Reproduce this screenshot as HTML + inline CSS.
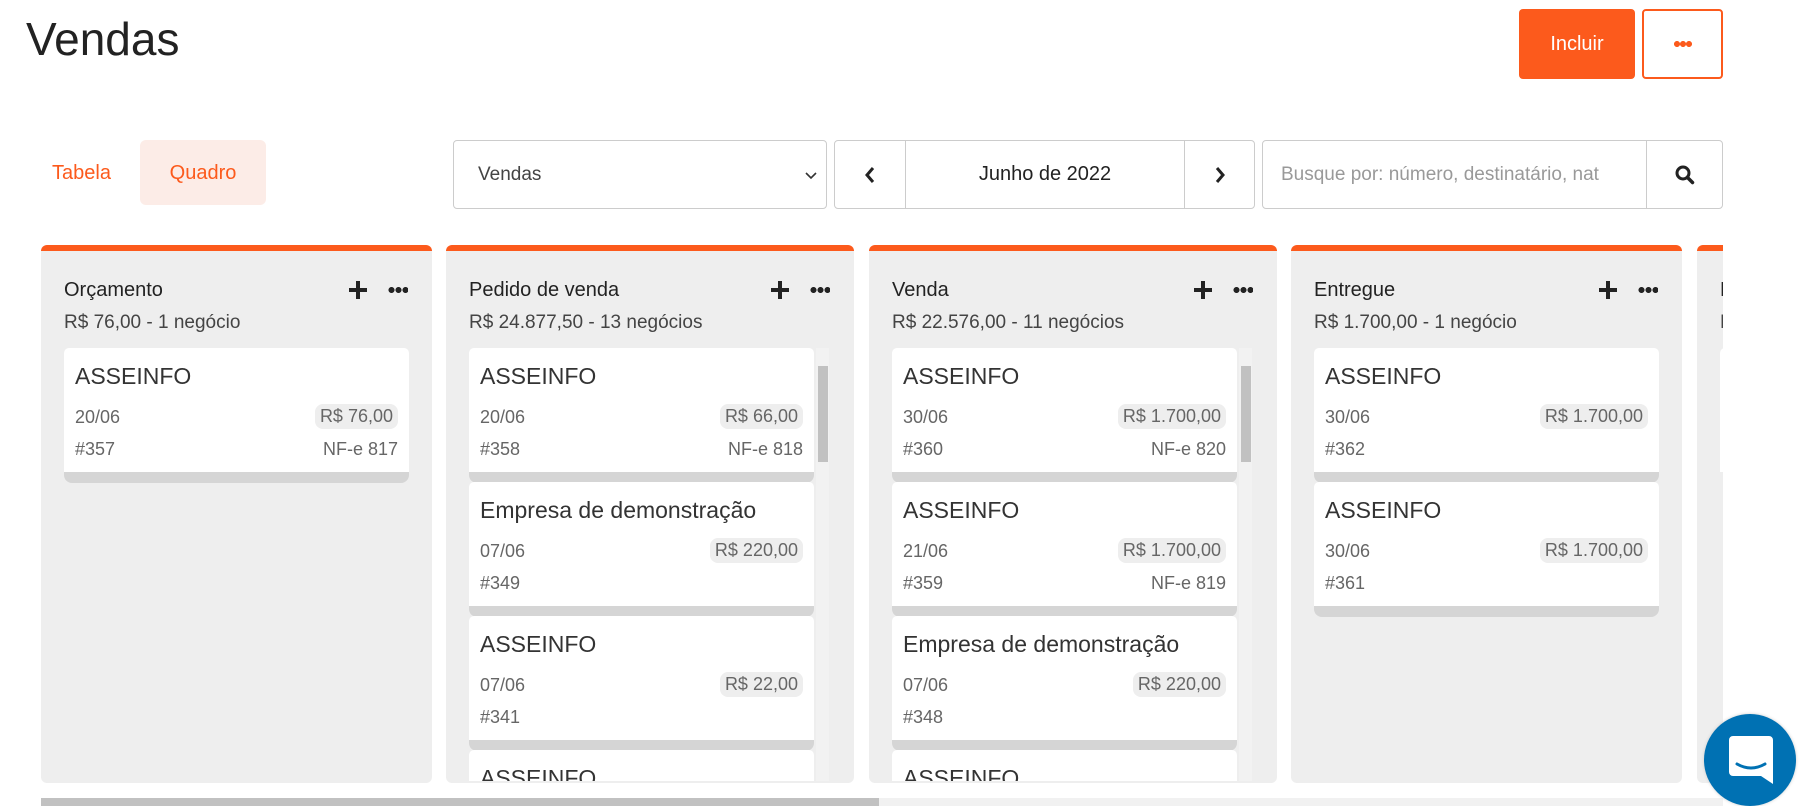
<!DOCTYPE html>
<html><head><meta charset="utf-8">
<style>
*{box-sizing:border-box;margin:0;padding:0}
html,body{width:1815px;height:806px;overflow:hidden}
body{background:#fff;font-family:"Liberation Sans",sans-serif;color:#333;position:relative}
.abs{position:absolute}
h1{position:absolute;left:26px;top:12px;font-size:46px;font-weight:400;color:#222}
.btn{position:absolute;top:9px;height:70px;border-radius:4px;display:flex;align-items:center;justify-content:center}
.box{position:absolute;top:140px;height:69px;border:1px solid #ccc;border-radius:4px;background:#fff;display:flex;align-items:center}
.col{position:absolute;top:245px;height:538px;background:#eee;border-radius:6px;border-top:6px solid #fc5a1c;overflow:hidden}
.ct{position:absolute;left:23px;top:28px;font-size:20px;color:#222}
.cs{position:absolute;left:23px;top:61px;font-size:19px;color:#444}
.plus{position:absolute;top:30px;width:18px;height:18px}
.plus:before{content:"";position:absolute;left:0;top:7px;width:18px;height:4px;background:#222}
.plus:after{content:"";position:absolute;left:7px;top:0;width:4px;height:18px;background:#222}
.dots{position:absolute;top:36px;width:20px;height:6px;background:radial-gradient(circle,#222 2.8px,transparent 3.2px) 0 0/7px 6px repeat-x}
.list{position:absolute;left:23px;top:97px}
.card{position:relative;width:345px;height:124px;background:#fff;border-radius:5px 5px 0 0;margin-bottom:10px}
.card:after{content:"";position:absolute;left:0;right:0;top:124px;height:11px;background:#d5d5d5;border-radius:0 0 8px 8px}
.card .n{position:absolute;left:11px;top:15px;font-size:23px;color:#333}
.card .d{position:absolute;left:11px;top:59px;font-size:18px;color:#666}
.card .h{position:absolute;left:11px;top:91px;font-size:18px;color:#666}
.card .p{position:absolute;right:11px;top:56px;font-size:18px;color:#666;background:#eee;border-radius:8px;padding:2px 5px}
.card .f{position:absolute;right:11px;top:91px;font-size:18px;color:#666}
.sb{position:absolute;width:13px;background:#f2f2f2}
</style></head><body>
<h1>Vendas</h1>
<div class="btn" style="left:1519px;width:116px;background:#fc5a1c;color:#fff;font-size:20px">Incluir</div>
<div class="btn" style="left:1642px;width:81px;border:2px solid #fc5a1c"><div class="dots" style="position:static;background:radial-gradient(circle,#fc5a1c 2.8px,transparent 3.2px) 0 0/6px 6px repeat-x;width:18px"></div></div>
<div class="abs" style="left:52px;top:162px;font-size:20px;color:#fc5a1c">Tabela</div>
<div class="abs" style="left:140px;top:140px;width:126px;height:65px;background:#fcece7;border-radius:6px;color:#fc5a1c;font-size:20px;display:flex;align-items:center;justify-content:center;padding-top:2px">Quadro</div>
<div class="box" style="left:453px;width:374px;padding-left:24px;font-size:19px;color:#444">Vendas<svg class="abs" style="right:8px;top:30px" width="14" height="9" viewBox="0 0 14 9"><path d="M2 2l5 5 5-5" fill="none" stroke="#333" stroke-width="1.6"/></svg></div>
<div class="box" style="left:834px;width:421px">
 <div style="width:71px;height:100%;border-right:1px solid #ccc;display:flex;align-items:center;justify-content:center"><svg width="12" height="18" viewBox="0 0 12 18"><path d="M9 2L3 9l6 7" fill="none" stroke="#222" stroke-width="3"/></svg></div>
 <div style="flex:1;text-align:center;font-size:20px;color:#222">Junho de 2022</div>
 <div style="width:70px;height:100%;border-left:1px solid #ccc;display:flex;align-items:center;justify-content:center"><svg width="12" height="18" viewBox="0 0 12 18"><path d="M3 2l6 7-6 7" fill="none" stroke="#222" stroke-width="3"/></svg></div>
</div>
<div class="box" style="left:1262px;width:461px;overflow:hidden">
 <div style="width:383px;padding-left:18px;font-size:19px;color:#999;white-space:nowrap;overflow:hidden">Busque por: número, destinatário, nat</div>
 <div style="flex:1;height:100%;border-left:1px solid #ccc;display:flex;align-items:center;justify-content:center"><svg width="22" height="22" viewBox="0 0 22 22"><circle cx="9" cy="9" r="6" fill="none" stroke="#222" stroke-width="3"/><path d="M13.5 13.5l5 5" stroke="#222" stroke-width="3.5" stroke-linecap="round"/></svg></div>
</div>

<div class="col" style="left:41px;width:391px">
 <div class="ct">Orçamento</div><div class="cs">R$ 76,00 - 1 negócio</div>
 <div class="plus" style="right:65px"></div><div class="dots" style="right:24px"></div>
 <div class="list"><div class="card"><div class="n">ASSEINFO</div><div class="d">20/06</div><div class="p">R$ 76,00</div><div class="h">#357</div><div class="f">NF-e 817</div></div></div>
</div>

<div class="col" style="left:446px;width:408px">
 <div class="ct">Pedido de venda</div><div class="cs">R$ 24.877,50 - 13 negócios</div>
 <div class="plus" style="right:65px"></div><div class="dots" style="right:24px"></div>
 <div class="list" style="height:433px;overflow:hidden;width:360px"><div style="width:347px">
  <div class="card"><div class="n">ASSEINFO</div><div class="d">20/06</div><div class="p">R$ 66,00</div><div class="h">#358</div><div class="f">NF-e 818</div></div>
  <div class="card"><div class="n">Empresa de demonstração</div><div class="d">07/06</div><div class="p">R$ 220,00</div><div class="h">#349</div></div>
  <div class="card"><div class="n">ASSEINFO</div><div class="d">07/06</div><div class="p">R$ 22,00</div><div class="h">#341</div></div>
  <div class="card"><div class="n">ASSEINFO</div></div>
 </div>
 <div class="sb" style="left:347px;top:0;height:433px"></div><div class="abs" style="left:349px;top:18px;width:10px;height:96px;background:#c1c1c1"></div></div>
</div>

<div class="col" style="left:869px;width:408px">
 <div class="ct">Venda</div><div class="cs">R$ 22.576,00 - 11 negócios</div>
 <div class="plus" style="right:65px"></div><div class="dots" style="right:24px"></div>
 <div class="list" style="height:433px;overflow:hidden;width:360px"><div style="width:347px">
  <div class="card"><div class="n">ASSEINFO</div><div class="d">30/06</div><div class="p">R$ 1.700,00</div><div class="h">#360</div><div class="f">NF-e 820</div></div>
  <div class="card"><div class="n">ASSEINFO</div><div class="d">21/06</div><div class="p">R$ 1.700,00</div><div class="h">#359</div><div class="f">NF-e 819</div></div>
  <div class="card"><div class="n">Empresa de demonstração</div><div class="d">07/06</div><div class="p">R$ 220,00</div><div class="h">#348</div></div>
  <div class="card"><div class="n">ASSEINFO</div></div>
 </div>
 <div class="sb" style="left:347px;top:0;height:433px"></div><div class="abs" style="left:349px;top:18px;width:10px;height:96px;background:#c1c1c1"></div></div>
</div>

<div class="col" style="left:1291px;width:391px">
 <div class="ct">Entregue</div><div class="cs">R$ 1.700,00 - 1 negócio</div>
 <div class="plus" style="right:65px"></div><div class="dots" style="right:24px"></div>
 <div class="list">
  <div class="card"><div class="n">ASSEINFO</div><div class="d">30/06</div><div class="p">R$ 1.700,00</div><div class="h">#362</div></div>
  <div class="card"><div class="n">ASSEINFO</div><div class="d">30/06</div><div class="p">R$ 1.700,00</div><div class="h">#361</div></div>
 </div>
</div>

<div class="col" style="left:1697px;width:26px;border-radius:6px 0 0 6px">
 <div class="ct">E</div><div class="cs">R</div>
 <div class="abs" style="left:23px;top:97px;width:10px;height:124px;background:#fff;border-radius:5px 0 0 0"></div>
</div>

<div class="abs" style="left:41px;top:798px;width:1682px;height:8px;background:#f1f1f1"></div>
<div class="abs" style="left:41px;top:798px;width:838px;height:8px;background:#c1c1c1"></div>

<div class="abs" style="left:1704px;top:714px;width:92px;height:92px;border-radius:50%;background:#0071b3;box-shadow:0 0 3px #ccc"></div>
<svg class="abs" style="left:1729px;top:736px" width="44" height="48" viewBox="0 0 44 48"><path d="M4 0h36a4 4 0 0 1 4 4v44l-12-8H4a4 4 0 0 1-4-4V4a4 4 0 0 1 4-4z" fill="#fff"/><path d="M8 28q14 8 28 0" fill="none" stroke="#0071b3" stroke-width="3" stroke-linecap="round"/></svg>
</body></html>
